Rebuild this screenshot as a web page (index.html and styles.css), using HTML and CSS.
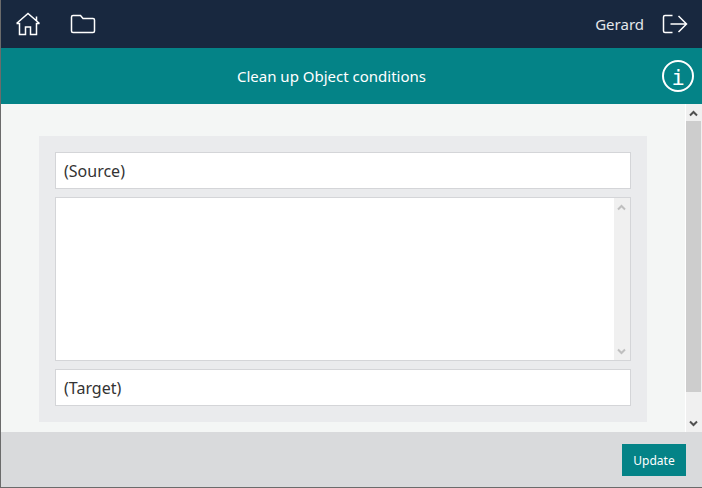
FILE: index.html
```html
<!DOCTYPE html>
<html lang="en">
<head>
  <meta charset="UTF-8">
  <meta name="viewport" content="width=device-width, initial-scale=1.0">
  <title>Clean up Object conditions</title>
  <link rel="stylesheet" href="styles.css">
</head>
<body>
  <header class="topbar">
    <nav class="topbar-nav">
      <a href="#" class="icon-link" aria-label="Home">
        <svg width="26" height="24" viewBox="0 0 26 24">
          <path d="M1.500 11.500 13 1.500l11.500 10M21.500 8.500V4.500M1.500 11.500H4.500V22.500H10.500V15h5v7.500h6V11.500h3"/>
        </svg>
      </a>
      <a href="#" class="icon-link" aria-label="Folders">
        <svg width="26" height="24" viewBox="0 0 26 24">
          <path d="M1.500 5V19q0 1.500 1.500 1.500H23q1.500 0 1.500-1.500V8q0-1.500-1.500-1.500H13L10.500 3.500H3q-1.500 0-1.500 1.500z"/>
        </svg>
      </a>
    </nav>
    <div class="topbar-user">
      <span>Gerard</span>
      <a href="#" class="icon-link" aria-label="Log out">
        <svg width="26" height="24" viewBox="0 0 26 24">
          <path d="M10.500 3.500H3q-1.500 0-1.500 1.500v14q0 1.500 1.500 1.500h7.500M8.500 12h16M16.500 4 24.500 12l-8 8"/>
        </svg>
      </a>
    </div>
  </header>

  <div class="titlebar">
    <h1>Clean up Object conditions</h1>
    <button type="button" class="info" aria-label="Information">i</button>
  </div>

  <main class="content">
    <form class="panel" id="conditions">
      <input type="text" class="field" aria-label="Source" value="(Source)">
      <div class="memo">
        <textarea aria-label="Conditions"></textarea>
        <div class="scrollbar disabled">
          <svg width="16" height="17" viewBox="0 0 16 17"><path d="M4 11.500 7.500 8l3.500 3.500"/></svg>
          <svg width="16" height="17" viewBox="0 0 16 17"><path d="M4 6.500 7.500 10l3.500-3.500"/></svg>
        </div>
      </div>
      <input type="text" class="field" aria-label="Target" value="(Target)">
    </form>
    <div class="scrollbar page-scroll">
      <svg width="16" height="17" viewBox="0 0 16 17"><path d="M4 11.500 7.500 8l3.500 3.500"/></svg>
      <div class="thumb"></div>
      <svg width="16" height="17" viewBox="0 0 16 17"><path d="M4 6.500 7.500 10l3.500-3.500"/></svg>
    </div>
  </main>

  <footer class="actions">
    <button type="submit" form="conditions" class="update">Update</button>
  </footer>
</body>
</html>
```

FILE: styles.css
```css
* {
  box-sizing: border-box;
}

body {
  margin: 0;
  min-height: 100vh;
  display: flex;
  flex-direction: column;
  border-left: 1px solid #6b6b6b;
  border-bottom: 1px solid #6b6b6b;
  background: #f4f6f5;
  font-family: "Noto Sans", sans-serif;
  font-size: 15px;
}

svg {
  display: block;
  fill: none;
  stroke: currentColor;
}

.topbar {
  display: flex;
  justify-content: space-between;
  align-items: center;
  height: 48px;
  padding: 0 14px;
  background: #18283f;
  color: #e3e6ea;
}

.topbar-nav {
  display: flex;
  gap: 29px;
}

.topbar-user {
  display: flex;
  align-items: center;
  gap: 18px;
}

.icon-link {
  color: #fff;
}

.icon-link svg {
  stroke-width: 1.5px;
}

.titlebar {
  display: flex;
  align-items: center;
  height: 56px;
  padding-right: 8px;
  background: #048387;
  color: #fff;
}

.titlebar h1 {
  flex: 1;
  margin: 0;
  font-size: 15px;
  font-weight: normal;
  text-align: center;
}

.info {
  width: 32px;
  height: 32px;
  padding: 3px 0 0;
  border: 2px solid #fff;
  border-radius: 50%;
  background: none;
  color: #fff;
  font-family: "DejaVu Sans Mono", monospace;
  font-size: 22px;
  line-height: 25px;
}

.content {
  flex: 1;
  display: flex;
}

.panel {
  flex: 1;
  display: flex;
  flex-direction: column;
  gap: 8px;
  margin: 32px 38px 10px;
  padding: 16px;
  background: #eaebed;
}

.field {
  width: 100%;
  height: 37px;
  padding: 0 8px;
  border: 1px solid #d4d5d8;
  background: #fff;
  color: #333;
  font-family: inherit;
  font-size: 16px;
}

.memo {
  flex: 1;
  display: flex;
  min-height: 164px;
  border: 1px solid #d4d5d8;
  background: #fff;
}

.memo textarea {
  flex: 1;
  padding: 8px;
  border: 0;
  resize: none;
  overflow: hidden;
  font: inherit;
}

.scrollbar {
  display: flex;
  flex-direction: column;
  justify-content: space-between;
  width: 16px;
  background: #f0f0f0;
  color: #505050;
}

.scrollbar svg {
  stroke-width: 2px;
}

.scrollbar.disabled {
  color: #bfbfbf;
}

.page-scroll {
  width: 17px;
  border-left: 1px solid #fff;
}

.thumb {
  flex: 1;
  margin: 0 1px 23px 0;
  background: #cdcdcd;
}

.actions {
  display: flex;
  justify-content: flex-end;
  padding: 12px 16px 11px;
  background: #d9dadc;
}

.update {
  width: 64px;
  height: 32px;
  padding: 0;
  border: 0;
  background: #048387;
  color: #fff;
  font-family: inherit;
  font-size: 12px;
}
```
